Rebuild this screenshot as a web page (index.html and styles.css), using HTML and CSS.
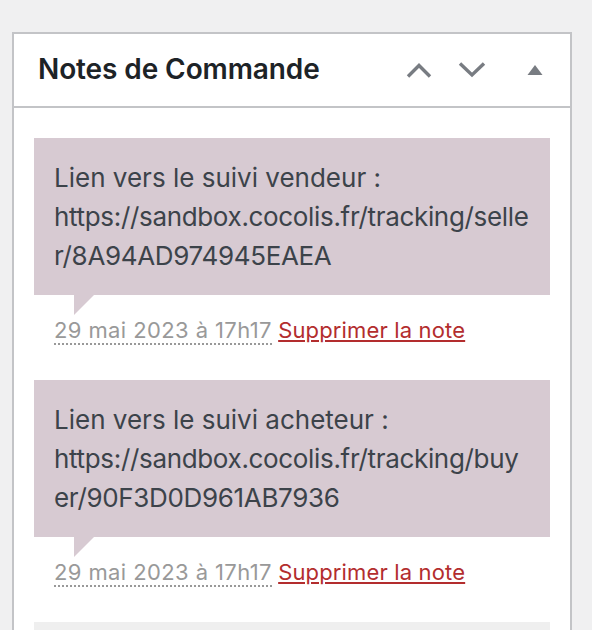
FILE: index.html
```html
<!DOCTYPE html>
<html lang="fr">
<head>
<meta charset="utf-8">
<title>Notes de Commande</title>
<link rel="stylesheet" href="styles.css">
</head>
<body>
<div class="postbox">
  <div class="postbox-header">
    <h2 class="hndle">Notes de Commande</h2>
    <div class="handle-actions">
      <button class="handle-btn" aria-label="Monter">
        <svg width="28" height="18" viewBox="0 0 28 18"><path d="M2 15.5 L13 4.5 L24 15.5" fill="none" stroke="#787c82" stroke-width="3.4"/></svg>
      </button>
      <button class="handle-btn" aria-label="Descendre">
        <svg width="28" height="18" viewBox="0 0 28 18"><path d="M2 2.5 L14 14 L26 2.5" fill="none" stroke="#787c82" stroke-width="3.4"/></svg>
      </button>
      <button class="handle-btn toggle" aria-label="Replier">
        <svg width="16" height="12" viewBox="0 0 16 12"><path d="M8 1 L15.5 11 L0.5 11 Z" fill="#787c82"/></svg>
      </button>
    </div>
  </div>
  <div class="inside">
    <ul class="order-notes">
      <li class="note system-note">
        <div class="note-content"><p>Lien vers le suivi vendeur : <span class="url">https://sandbox.cocolis.fr/tracking/seller/8A94AD974945EAEA</span></p></div>
        <p class="meta"><abbr class="exact-date" title="29/05/2023 17:17">29 mai 2023 à 17h17</abbr> <a href="#" class="delete-note">Supprimer la note</a></p>
      </li>
      <li class="note system-note">
        <div class="note-content"><p>Lien vers le suivi acheteur : <span class="url">https://sandbox.cocolis.fr/tracking/buyer/90F3D0D961AB7936</span></p></div>
        <p class="meta"><abbr class="exact-date" title="29/05/2023 17:17">29 mai 2023 à 17h17</abbr> <a href="#" class="delete-note">Supprimer la note</a></p>
      </li>
      <li class="note">
        <div class="note-content"><p>Commande créée.</p></div>
      </li>
    </ul>
  </div>
</div>
</body>
</html>
```

FILE: styles.css
```css
html, body {
  margin: 0;
  padding: 0;
  background: #f0f0f1;
}
body {
  padding: 32px 20px 0 12px;
  font-family: Inter, "Liberation Sans", Arial, sans-serif;
  color: #3c434a;
  overflow: hidden;
}
.postbox {
  width: 556px;
  background: #fff;
  border: 2px solid #c3c4c7;
  border-bottom: none;
  min-height: 640px;
}
.postbox-header {
  display: flex;
  align-items: center;
  justify-content: space-between;
  height: 72px;
  border-bottom: 2px solid #c3c4c7;
}
.hndle {
  margin: 0;
  padding-left: 24px;
  font-size: 28px;
  font-weight: 600;
  color: #1d2327;
  line-height: 1.4;
  letter-spacing: -0.1px;
}
.handle-actions {
  display: flex;
  align-items: center;
  padding-right: 27px;
}
.handle-btn {
  border: 0;
  background: none;
  padding: 0;
  margin: 0 0 0 24px;
  display: flex;
  align-items: center;
  cursor: pointer;
}
.handle-btn.toggle {
  margin-left: 41px;
}
.inside {
  padding: 30px 20px 0;
}
.order-notes {
  list-style: none;
  margin: 0;
  padding: 0;
}
.note {
  margin: 0 0 14px;
}
.note-content {
  position: relative;
  background: #efefef;
  padding: 20px;
}
.system-note .note-content {
  background: #d7cad2;
}
.note-content::after {
  content: "";
  position: absolute;
  left: 40px;
  bottom: -20px;
  width: 0;
  height: 0;
  border-style: solid;
  border-width: 20px 20px 0 0;
  border-color: #efefef transparent transparent transparent;
}
.system-note .note-content::after {
  border-top-color: #d7cad2;
}
.note-content p {
  margin: 0;
  font-size: 26px;
  line-height: 39px;
  overflow-wrap: anywhere;
}
.url {
  letter-spacing: -0.33px;
}
.meta {
  margin: 0;
  padding: 20px;
  font-size: 22px;
  line-height: 30.8px;
  color: #999;
}
.exact-date {
  letter-spacing: 0.4px;
  text-decoration: none;
  border-bottom: 2px dotted #999;
}
.delete-note {
  color: #b32d2e;
  letter-spacing: 0.15px;
  text-decoration: underline;
  text-decoration-thickness: 2px;
  text-underline-offset: 2px;
}
```
